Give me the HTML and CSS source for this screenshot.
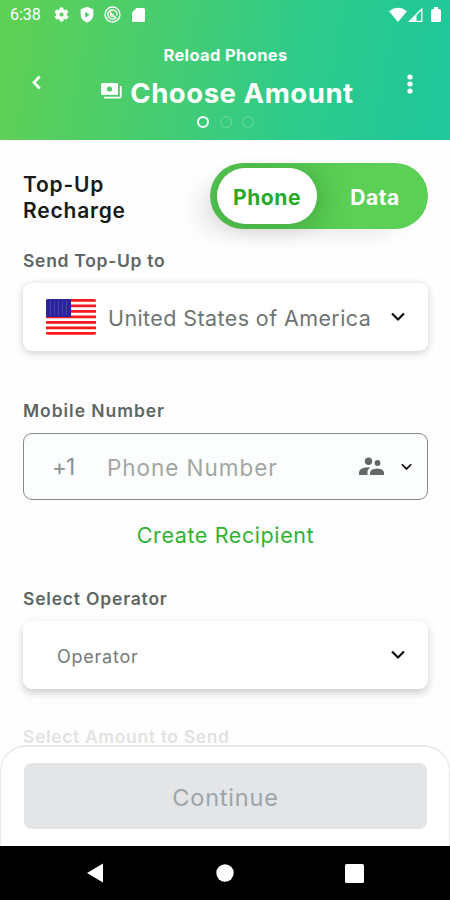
FILE: index.html
```html
<!DOCTYPE html>
<html lang="en">
<head>
<meta charset="utf-8">
<title>Reload Phones</title>
<link rel="stylesheet" href="styles.css">
</head>
<body>
<div class="app">
  <header class="header">
    <div class="status">
      <span class="time">6:38</span>
      <svg class="gear" width="17" height="17" viewBox="0 0 24 24" fill="currentColor"><path d="M19.4 13a7.800 7.800 0 0 0 0-2l2.100-1.650a.5.5 0 0 0 .12-.64l-2-3.460a.5.5 0 0 0-.61-.22l-2.490 1a7.300 7.300 0 0 0-1.690-.98l-.38-2.650A.49.490 0 0 0 14 2h-4a.49.490 0 0 0-.49.420l-.38 2.650c-.61.250-1.170.590-1.690.980l-2.490-1a.5.5 0 0 0-.61.220l-2 3.460a.5.5 0 0 0 .12.640L4.570 11a8 8 0 0 0 0 2l-2.110 1.650a.5.5 0 0 0-.12.640l2 3.460c.12.220.39.300.61.220l2.490-1c.52.400 1.080.730 1.690.980l.38 2.650c.03.240.24.400.49.400h4c.25 0 .46-.18.490-.42l.38-2.650c.61-.25 1.170-.59 1.690-.98l2.490 1c.23.090.49 0 .61-.22l2-3.460a.5.5 0 0 0-.12-.64zM12 15a3 3 0 1 1 0-6 3 3 0 0 1 0 6z"/></svg>
      <svg class="shield" width="16" height="17" viewBox="0 0 24 24" preserveAspectRatio="none"><path fill="currentColor" d="M12 1 2.500 4.500V12c0 5.400 4 9.500 9.500 11.500 5.500-2 9.500-6.100 9.500-11.500V4.500z"/><path class="shield-play" d="M9.300 8v8.500l6.700-4.300z"/></svg>
      <svg class="sync" width="17" height="17" viewBox="0 0 24 24" fill="none" stroke="currentColor" stroke-width="2"><circle cx="12" cy="12" r="10.500"/><path d="M15.500 17.500A6.500 6.500 0 1 1 18.300 13.500M8 8l9.500 9.500M9.300 11.500a3 3 0 0 0 3.200 3.500"/></svg>
      <svg class="sd" width="13" height="16" viewBox="0 0 13 16" fill="currentColor"><path d="M4.500 1h7Q13 1 13 2.500v11q0 1.500-1.500 1.500h-10Q0 15 0 13.500v-8z"/></svg>
      <span class="spacer"></span>
      <svg width="18" height="16" viewBox="0 0 18 16" fill="currentColor"><path d="M0 4.200Q9-2.600 18 4.200L9 15z"/></svg>
      <svg class="signal" width="15" height="16" viewBox="0 0 15 16"><path fill="none" stroke="currentColor" stroke-width="1.300" d="M1.600 14.300 13.800 2v12.300z"/><path fill="currentColor" d="M1 15 8.500 7.500V15z"/></svg>
      <svg class="battery" width="10" height="16" viewBox="0 0 10 16" fill="currentColor"><path d="M3 0h4v2h1.500Q10 2 10 3.500v10q0 1.500-1.500 1.500h-7Q0 15 0 13.500v-10Q0 2 1.500 2H3z"/></svg>
    </div>
    <div class="titlebar">
      <svg class="back" width="9" height="15" viewBox="0 0 9 15" fill="none" stroke="currentColor" stroke-width="2.600"><path d="M7.700 1.500 2 7.500l5.700 6"/></svg>
      <div class="heading">
        <div class="subtitle"><span>Reload Phones</span></div>
        <div class="title">
          <svg width="21" height="16" viewBox="0 0 21 16"><path fill="currentColor" fill-rule="evenodd" d="M1.500 0h14q1.500 0 1.500 1.500v9q0 1.500-1.500 1.500h-14Q0 12 0 10.500v-9Q0 0 1.500 0zM8.500 3.400a2.600 2.600 0 1 0 0 5.200 2.600 2.600 0 0 0 0-5.200z"/><path fill="none" stroke="currentColor" stroke-width="1.800" d="M3 14.600h15.500q1.300 0 1.300-1.300V3"/></svg>
          <h1>Choose Amount</h1>
        </div>
        <div class="steps"><i class="current"></i><i></i><i></i></div>
      </div>
      <svg class="more" width="6" height="22" viewBox="0 0 6 22" fill="currentColor"><circle cx="3" cy="4" r="2.600"/><circle cx="3" cy="11" r="2.600"/><circle cx="3" cy="18" r="2.600"/></svg>
    </div>
  </header>

  <main class="main">
    <div class="mode">
      <h2>Top-Up<br>Recharge</h2>
      <div class="toggle"><span class="on">Phone</span><span class="off">Data</span></div>
    </div>
    <div class="label label-send">Send Top-Up to</div>
    <div class="card country">
      <svg width="50" height="36" viewBox="0 0 50 36"><defs><clipPath id="flag"><rect width="50" height="36" rx="2"/></clipPath></defs><g clip-path="url(#flag)"><path fill="#fff" d="M0 0h50v36H0z"/><path stroke="#f5191d" stroke-width="2.800" d="M0 1.400h50M0 6.900h50M0 12.400h50M0 17.900h50M0 23.400h50M0 28.900h50M0 34.400h50"/><path fill="#2b229c" d="M0 0h25v18H0z"/><path stroke="#4a44ae" stroke-width="1" d="M4.500 2v14M8.500 2v14M12.500 2v14M16.500 2v14M20.500 2v14"/></g></svg>
      <span class="value">United States of America</span>
      <svg class="chev" width="14" height="10" viewBox="0 0 14 10"><path d="M1 1.500 7 7.500l6-6"/></svg>
    </div>
    <div class="label label-mobile">Mobile Number</div>
    <div class="field">
      <span class="code">+1</span>
      <span class="placeholder">Phone Number</span>
      <svg class="people" width="26" height="19" viewBox="0 0 26 19" fill="currentColor"><circle cx="9.500" cy="4.200" r="3.700"/><circle cx="18.500" cy="6" r="2.900"/><path d="M0 18v-2.500q0-4.800 9-5.300l2.200.2q-2.700 1.700-2.700 5V18zM11 18v-2q0-4.200 7.300-4.500Q25 11.800 25 16v2z"/></svg>
      <svg class="chev" width="11" height="8" viewBox="0 0 14 10"><path d="M1 1.500 7 7.500l6-6"/></svg>
    </div>
    <div class="create"><span>Create Recipient</span></div>
    <div class="label label-operator">Select Operator</div>
    <div class="card operator">
      <span class="value">Operator</span>
      <svg class="chev" width="14" height="10" viewBox="0 0 14 10"><path d="M1 1.500 7 7.500l6-6"/></svg>
    </div>
    <div class="label label-amount">Select Amount to Send</div>
  </main>

  <div class="sheet"><div class="continue"><span>Continue</span></div></div>
  <nav class="nav">
    <svg width="18" height="20" viewBox="0 0 18 20"><path d="M17 .5v19L1 10z"/></svg>
    <svg width="18" height="18" viewBox="0 0 18 18"><circle cx="9" cy="9" r="8.700"/></svg>
    <svg width="19" height="19" viewBox="0 0 19 19"><rect width="19" height="19" rx="1.500"/></svg>
  </nav>
</div>
</body>
</html>
```
FILE: styles.css
```css
* { box-sizing: border-box; }
body { margin: 0; background: #fefefe; font-family: Inter, sans-serif; }
svg { display: block; flex: none; }
h1, h2 { margin: 0; }
.app { width: 450px; height: 900px; display: flex; flex-direction: column; overflow: hidden; }

.header { height: 140px; flex: none; color: #fff; background: linear-gradient(100deg, #5ed055 3%, #40cc78 45%, #2ecb8a 65%, #20c79a 97%); }
.status { height: 29px; padding: 0 9px 0 10px; display: flex; align-items: center; }
.time { width: 43px; font: 16px/29px Roboto, sans-serif; }
.shield { margin-left: 9px; }
.shield-play { fill: #4fce68; }
.sync { margin-left: 9px; }
.sd { margin-left: 11px; }
.spacer { flex: 1; }
.signal { margin-left: 1px; }
.battery { margin-left: 8px; }
.titlebar { height: 111px; display: flex; padding: 0 37px 0 32px; }
.back { margin-top: 46px; }
.more { margin-top: 44px; }
.heading { flex: 1; display: flex; flex-direction: column; align-items: center; padding-left: 3px; }
.subtitle { margin-top: 16px; font-size: 16.5px; font-weight: 700; line-height: 20px; letter-spacing: .35px; }
.title { margin: 12px 0 0 4px; display: flex; gap: 8px; height: 34px; }
.title svg { margin-top: 6px; }
.title h1 { font-size: 27.5px; font-weight: 700; line-height: 32px; letter-spacing: .55px; white-space: nowrap; }
.steps { display: flex; gap: 10.500px; margin-top: 5px; }
.steps i { width: 12px; height: 12px; border: 1.5px solid #fff; border-radius: 50%; opacity: .25; }
.steps .current { opacity: 1; border-width: 2px; }

.main { height: 605px; flex: none; padding: 23px 22px 0 23px; }
.mode { display: flex; justify-content: space-between; height: 66px; }
.mode h2 { margin-top: 9px; font-size: 21px; line-height: 26px; font-weight: 600; color: #161b1a; letter-spacing: .8px; }
.toggle { width: 218px; height: 66px; border-radius: 33px; background: linear-gradient(90deg, #50bf4c, #55c950 50%, #5ccf57 65%); padding: 5px 7px; display: flex; font-size: 21px; font-weight: 700; line-height: 60px; letter-spacing: .6px; text-align: center; box-shadow: -20px 12px 28px -12px #0002; }
.toggle .on { width: 100px; height: 56px; border-radius: 28px; background: #fff; color: #26aa28; box-shadow: 4px 4px 20px #0002; }
.toggle .off { flex: 1; padding-left: 12px; color: #fff; }
.label { height: 22px; font-size: 17.5px; line-height: 23px; font-weight: 600; color: #5e6664; letter-spacing: .7px; white-space: nowrap; }
.label-send { margin-top: 20px; }
.card { display: flex; align-items: center; height: 68px; margin-top: 12px; border-radius: 9px; background: #fff; box-shadow: 0 2px 8px #0003; }
.country { padding: 0 23px; }
.country .value { margin-left: 12px; font-size: 21.5px; color: #707573; letter-spacing: .4px; white-space: nowrap; margin-top: 1px; }
.chev { fill: none; stroke: #111; stroke-width: 2.200; margin-left: auto; }
.label-mobile { margin-top: 48px; letter-spacing: .95px; }
.field { display: flex; align-items: center; height: 67px; margin-top: 12px; border: 1px solid #858989; border-radius: 9px; background: #fcfdfd; padding: 0 15px 0 28px; font-size: 22.5px; }
.code { width: 55px; color: #8b9090; letter-spacing: -.8px; }
.placeholder { color: #a3a6a5; letter-spacing: .95px; white-space: nowrap; margin-top: 1px; }
.people { margin-left: auto; color: #626866; }
.field .chev { margin-left: 16px; }
.create { margin-top: 22px; height: 27px; line-height: 27px; font-size: 21.5px; color: #31b234; text-align: center; letter-spacing: .6px; }
.label-operator { margin-top: 38px; letter-spacing: .8px; }
.operator { padding: 0 23px 0 34px; box-shadow: 0 4px 8px #0003; }
.operator .value { color: #757a78; font-size: 18px; letter-spacing: .75px; margin-top: 3px; }
.label-amount { margin-top: 38px; height: 18px; line-height: 19px; letter-spacing: .65px; color: #e1e3e3; }

.sheet { height: 101px; flex: none; padding: 16px 22px 0 23px; border: 1px solid #e7e8e8; border-width: 2px 1px 0; border-radius: 26px 26px 0 0; background: #fff; }
.continue { height: 66px; border-radius: 8px; background: #e3e5e7; color: #9da4a9; font-size: 23.5px; line-height: 69px; text-align: center; letter-spacing: .8px; }
.nav { height: 54px; flex: none; display: flex; align-items: center; justify-content: space-between; padding: 0 86px; background: #000; fill: #fff; }
```
